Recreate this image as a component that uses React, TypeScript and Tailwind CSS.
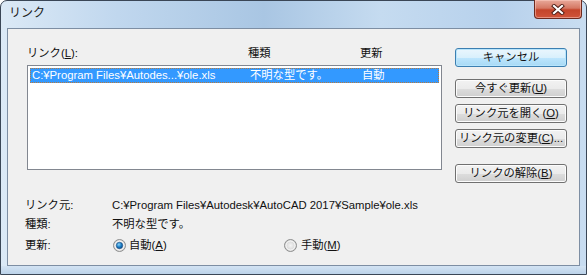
import React from "react";

const FONT = { fontFamily: '"Liberation Sans", "Noto Sans CJK JP", sans-serif' };

function Btn({ children, primary }: { children: React.ReactNode; primary?: boolean }) {
  return (
    <div
      className={
        "h-[19px] w-[112px] rounded-[3px] border flex items-center justify-center whitespace-nowrap text-[11.3px] leading-none text-[#111] " +
        (primary
          ? "border-[#3c7fb1] shadow-[inset_0_0_0_1px_#b8e5fc] bg-[linear-gradient(#eaf6fd_0%,#d9f0fc_50%,#bee6fd_51%,#a7d9f5_100%)]"
          : "border-[#707070] shadow-[inset_0_0_0_1px_#fcfcfc] bg-[linear-gradient(#f2f2f2_0%,#ebebeb_50%,#dddddd_51%,#cfcfcf_100%)]")
      }
    >
      {children}
    </div>
  );
}

function Radio({ checked }: { checked?: boolean }) {
  return (
    <svg width="13" height="13" viewBox="0 0 13 13">
      <defs>
        <radialGradient id="rg" cx="50%" cy="50%" r="50%">
          <stop offset="0%" stopColor="#f4f4f4" />
          <stop offset="100%" stopColor="#cfcfcf" />
        </radialGradient>
        <radialGradient id="dot" cx="40%" cy="35%" r="65%">
          <stop offset="0%" stopColor="#8ad4fa" />
          <stop offset="60%" stopColor="#1a7dc4" />
          <stop offset="100%" stopColor="#0c4f8f" />
        </radialGradient>
      </defs>
      <circle cx="6.5" cy="6.5" r="6" fill="url(#rg)" stroke="#8e8f8f" strokeWidth="1" />
      <circle cx="6.5" cy="6.5" r="4.5" fill="none" stroke="#ffffff" strokeWidth="0.8" />
      {checked && <circle cx="6.5" cy="6.5" r="3.2" fill="url(#dot)" stroke="#1c4f86" strokeWidth="0.6" />}
    </svg>
  );
}

export default function App() {
  return (
    <div style={FONT} className="w-[587px] h-[275px] bg-white">
      <div className="w-[587px] h-[275px] rounded-t-[7px] border border-[#3a4656] flex flex-col bg-[linear-gradient(90deg,#dbe9f6_0%,#c0d7ee_20%,#a9c6e3_45%,#c5dbf0_65%,#b7d1ec_85%,#c9ddf1_100%)]">
        {/* title bar */}
        <div className="h-[27px] flex items-start justify-between">
          <div className="pl-[8px] pt-[5px] text-[12px] leading-[14px] text-[#1c1c1c]">リンク</div>
          <div className="mr-[4px] w-[48px] h-[19px] -mt-px rounded-b-[4px] border border-[#6d2a1f] border-t-0 flex items-center justify-center bg-[linear-gradient(#e8a99a_0%,#d57864_45%,#c4442a_55%,#d0543a_100%)] shadow-[inset_0_0_0_1px_rgba(255,210,200,0.5)]">
            <svg width="14" height="11" viewBox="0 0 14 11">
              <path d="M3 2 L11 9 M11 2 L3 9" stroke="#4a1a12" strokeWidth="4" strokeLinecap="square" />
              <path d="M3 2 L11 9 M11 2 L3 9" stroke="#ffffff" strokeWidth="2.2" strokeLinecap="square" />
            </svg>
          </div>
        </div>
        {/* client area */}
        <div className="mx-[6px] h-[238px] border border-[#7d8ea3] bg-[#f0f0f0] text-[11.3px] text-[#111] whitespace-nowrap">
          <div className="flex items-start pl-[19px] pt-[18px]">
            <div className="w-[415px]">
              <div className="h-[18px] flex leading-[12px]">
                <div className="w-[221px]">
                  リンク(<u>L</u>):
                </div>
                <div className="w-[112px]">種類</div>
                <div>更新</div>
              </div>
              <div className="h-[105px] border border-[#828790] bg-white pt-[2px] px-[2px]">
                <div className="h-[15px] flex items-center bg-[#3399ff] text-white outline-1 outline-dotted outline-[#b87a3d] -outline-offset-1 pl-[2px] leading-none">
                  <div className="w-[218px]">C:¥Program Files¥Autodes...¥ole.xls</div>
                  <div className="w-[112px]">不明な型です。</div>
                  <div>自動</div>
                </div>
              </div>
            </div>
            <div className="ml-[13px] pt-[1px] flex flex-col">
              <Btn primary>キャンセル</Btn>
              <div className="mt-[12px]">
                <Btn>
                  今すぐ更新(<u>U</u>)
                </Btn>
              </div>
              <div className="mt-[6px]">
                <Btn>
                  リンク元を開く(<u>O</u>)
                </Btn>
              </div>
              <div className="mt-[6px]">
                <Btn>
                  リンク元の変更(<u>C</u>)...
                </Btn>
              </div>
              <div className="mt-[16px]">
                <Btn>
                  リンクの解除(<u>B</u>)
                </Btn>
              </div>
            </div>
          </div>
          {/* info */}
          <div className="mt-[13px] pl-[17px] flex flex-col leading-none">
            <div className="h-[19px] flex items-center">
              <div className="w-[87px]">リンク元:</div>
              <div>C:¥Program Files¥Autodesk¥AutoCAD 2017¥Sample¥ole.xls</div>
            </div>
            <div className="h-[19px] flex items-center">
              <div className="w-[87px]">種類:</div>
              <div>不明な型です。</div>
            </div>
            <div className="mt-[2px] h-[19px] flex items-center">
              <div className="w-[87px]">更新:</div>
              <div className="w-[172px] flex items-center pl-px gap-[3px]">
                <Radio checked />
                <span>
                  自動(<u>A</u>)
                </span>
              </div>
              <div className="flex items-center gap-[4px]">
                <Radio />
                <span>
                  手動(<u>M</u>)
                </span>
              </div>
            </div>
          </div>
        </div>
        <div className="flex-1 bg-[linear-gradient(#d3e3f3,#bcd3ea)]" />
      </div>
    </div>
  );
}
